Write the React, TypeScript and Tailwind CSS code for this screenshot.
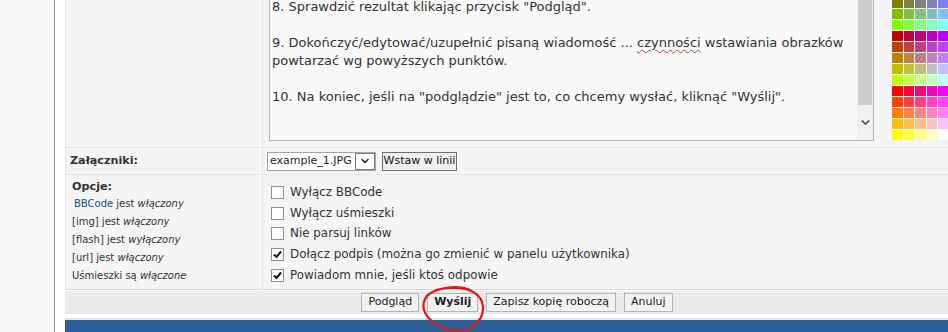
import { ChevronDown } from "lucide-react";

const levels = ["00", "40", "80", "BF", "FF"];

// rows of the phpBB palette that are still visible under the textarea row
const paletteRows = [
  ["80", "80"],
  ["80", "BF"],
  ["80", "FF"],
  ["BF", "00"],
  ["BF", "40"],
  ["BF", "80"],
  ["BF", "BF"],
  ["BF", "FF"],
  ["FF", "00"],
  ["FF", "40"],
  ["FF", "80"],
  ["FF", "BF"],
  ["FF", "FF"],
];

const flags = [
  { pre: "BBCode", link: true, mid: " jest ", state: "włączony" },
  { pre: "[img]", mid: " jest ", state: "włączony" },
  { pre: "[flash]", mid: " jest ", state: "wyłączony" },
  { pre: "[url]", mid: " jest ", state: "włączony" },
  { pre: "Uśmieszki", mid: " są ", state: "włączone" },
];

const options = [
  { label: "Wyłącz BBCode", checked: false },
  { label: "Wyłącz uśmieszki", checked: false },
  { label: "Nie parsuj linków", checked: false },
  { label: "Dołącz podpis (można go zmienić w panelu użytkownika)", checked: true },
  { label: "Powiadom mnie, jeśli ktoś odpowie", checked: true },
];

const Checkbox: React.FC<{ checked: boolean }> = ({ checked }) => (
  <span className="w-[13px] h-[13px] border border-[#8e8f8f] bg-white flex items-center justify-center shrink-0">
    {checked && (
      <svg width="9" height="9" viewBox="0 0 9 9">
        <path d="M1 4.5 L3.5 7 L8 1.5" fill="none" stroke="#111" strokeWidth="2" />
      </svg>
    )}
  </span>
);

const Btn: React.FC<{ text: string; bold?: boolean }> = ({ text, bold }) => (
  <span
    className={`h-[19px] px-[6px] flex items-center border border-[#b4b4b4] bg-[#f2f2f2] text-[11px] text-[#222] ${
      bold ? "font-bold" : ""
    }`}
  >
    {text}
  </span>
);

const App: React.FC = () => {
  return (
    <div className="relative w-[948px] h-[332px] overflow-hidden flex bg-[#f7f7f7] font-['DejaVu_Sans',sans-serif] text-[#333]">
      <div className="w-[54px] shrink-0" />
      <div className="w-px shrink-0 bg-[#7f95b2]" />
      <div className="w-[10px] shrink-0 bg-white" />

      <div className="flex-1 flex flex-col bg-white">
        {/* message row */}
        <div className="h-[147px] flex bg-[#f5f5f5] border-l border-[#e4e4e4]">
          <div className="w-[197px] border-r border-[#e4e4e4]" />
          <div className="flex-1 flex pl-[6px] items-start">
            <div className="w-[605px] h-[141px] flex bg-[#f9f9f9] border-l border-r border-b border-[#a9b4c0] overflow-hidden">
              <div className="flex-1 pl-[2px] -mt-[2px] text-[13px] leading-[18px] text-[#333] whitespace-pre">
                <div>8. Sprawdzić rezultat klikając przycisk "Podgląd".</div>
                <div>&nbsp;</div>
                <div>
                  9. Dokończyć/edytować/uzupełnić pisaną wiadomość ...{" "}
                  <span className="underline decoration-wavy decoration-[#d03030] decoration-1 underline-offset-2">
                    czynności
                  </span>{" "}
                  wstawiania obrazków
                </div>
                <div>powtarzać wg powyższych punktów.</div>
                <div>&nbsp;</div>
                <div>10. Na koniec, jeśli na "podglądzie" jest to, co chcemy wysłać, kliknąć "Wyślij".</div>
              </div>
              <div className="w-[16px] flex flex-col bg-[#f0f0f0]">
                <div className="h-[105px] mx-px bg-[#cdcdcd]" />
                <div className="flex-1 flex items-center justify-center text-[#555]">
                  <ChevronDown size={13} strokeWidth={3} />
                </div>
              </div>
            </div>
            <div className="ml-[18px] -mt-[2px] grid grid-cols-[repeat(5,10.6px)] auto-rows-[10px] gap-px">
              {paletteRows.map(([r, g]) =>
                levels.map((b) => (
                  <div key={r + g + b} style={{ backgroundColor: `#${r}${g}${b}` }} />
                ))
              )}
            </div>
          </div>
        </div>

        {/* attachments row */}
        <div className="h-[28px] flex bg-[#f5f5f5] border-t border-b border-[#e4e4e4] border-l">
          <div className="w-[197px] border-r border-[#e4e4e4] flex items-center pl-[4px] text-[11.2px] font-bold text-[#333]">
            Załączniki:
          </div>
          <div className="flex-1 flex items-center pl-[4px] gap-[6px]">
            <div className="h-[19px] w-[109px] flex items-center bg-white border border-[#a5a5a5] text-[11px] text-[#222]">
              <span className="flex-1 pl-[2px]">example_1.JPG</span>
              <span className="w-[20px] h-[17px] border border-[#7a7a7a] flex items-center justify-center">
                <ChevronDown size={12} strokeWidth={3} />
              </span>
            </div>
            <span className="h-[19px] w-[75px] flex items-center justify-center border border-[#6f6f6f] bg-[#f0f0f0] text-[11px] text-[#111]">
              Wstaw w linii
            </span>
          </div>
        </div>

        {/* options row */}
        <div className="h-[115px] flex bg-[#f5f5f5] border-b border-[#d6d6d6] border-l border-l-[#e4e4e4]">
          <div className="w-[197px] border-r border-[#e4e4e4] pl-[6px] pt-[4px]">
            <div className="text-[11.2px] font-bold text-[#333] leading-[16px]">Opcje:</div>
            <div className="flex flex-col text-[10px] leading-[18px] text-[#333]">
              {flags.map((f) => (
                <div key={f.pre} className={f.link ? "pl-[2px]" : ""}>
                  <span className={f.link ? "text-[#105289]" : ""}>{f.pre}</span>
                  {f.mid}
                  <em>{f.state}</em>
                </div>
              ))}
            </div>
          </div>
          <div className="flex-1 flex flex-col pl-[8px] pt-[11px] gap-[7.7px]">
            {options.map((o) => (
              <div key={o.label} className="flex items-center gap-[6px] text-[11.9px] leading-[13px] text-[#333]">
                <Checkbox checked={o.checked} />
                <span>{o.label}</span>
              </div>
            ))}
          </div>
        </div>

        {/* buttons */}
        <div className="border-t border-white h-[24px] bg-[#ebebeb] flex items-center justify-center gap-[8px] pl-[20px]">
          <Btn text="Podgląd" />
          <Btn text="Wyślij" bold />
          <Btn text="Zapisz kopię roboczą" />
          <Btn text="Anuluj" />
        </div>
        <div className="h-[4px] bg-white" />
        <div className="h-[2px] bg-[#dfe4ea]" />
        <div className="flex-1 bg-[#2b5d97]" />
      </div>

      {/* hand-drawn circle around the send button */}
      <svg className="absolute left-0 top-0" width="948" height="332" viewBox="0 0 948 332">
        <path
          d="M470 290 C458 284 430 288 425 299 C419 312 432 326 450 330 C468 334 484 322 483 307 C482 294 470 287 450 288 C444 288 440 289 437 290"
          fill="none"
          stroke="#e01818"
          strokeWidth="2.2"
          strokeLinecap="round"
        />
      </svg>
    </div>
  );
};

export default App;
